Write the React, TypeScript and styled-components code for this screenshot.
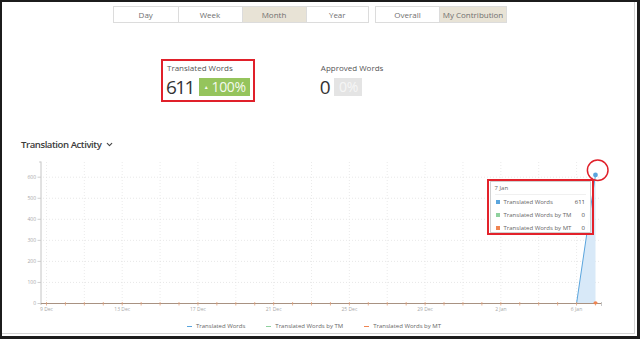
import React from "react";
import styled, { createGlobalStyle } from "styled-components";
import { ChevronDown } from "lucide-react";

const Global = createGlobalStyle`
  html, body { margin: 0; padding: 0; background: #fff; }
  body { font-family: "Open Sans", "Liberation Sans", sans-serif; }
  * { box-sizing: border-box; }
`;

const Frame = styled.div`
  width: 640px;
  height: 339px;
  border-style: solid;
  border-color: #1c1c1c;
  border-width: 2px 3px 3px 2px;
  background: #fff;
  overflow: hidden;
`;

const Page = styled.div`
  width: 633px;
  height: 332px;
  border-right: 1px solid #d4d4d4;
  border-bottom: 1px solid #d4d4d4;
  display: flex;
  flex-direction: column;
`;

const Toolbar = styled.div`
  display: flex;
  gap: 6px;
  margin-top: 4px;
  padding-left: 111px;
  height: 17px;
`;

const Group = styled.div`
  display: flex;
  border: 1px solid #dcdcdc;
  background: #fff;
`;

const TabButton = styled.div<{ $w: number; $active?: boolean }>`
  width: ${(p) => p.$w}px;
  height: 15px;
  display: flex;
  align-items: center;
  justify-content: center;
  font-size: 8px;
  color: #707070;
  background: ${(p) => (p.$active ? "#e8e3d6" : "#fff")};
  & + & { border-left: 1px solid #dcdcdc; }
`;

const StatsRow = styled.div`
  display: flex;
  gap: 60px;
  margin-top: 36px;
  padding-left: 159px;
`;

const StatBox = styled.div<{ $highlight?: boolean }>`
  border: 2px solid ${(p) => (p.$highlight ? "#e0202a" : "transparent")};
  padding: 2px 3px 2px 3px;
`;

const StatLabel = styled.div`
  font-size: 8px;
  line-height: 10px;
  color: #555;
  padding-left: 1px;
  white-space: nowrap;
`;

const StatValueRow = styled.div`
  display: flex;
  align-items: center;
  gap: 4px;
  margin-top: 3px;
  height: 22px;
`;

const StatNumber = styled.div`
  font-size: 19px;
  line-height: 22px;
  font-weight: 400;
  color: #333;
  letter-spacing: -1.6px;
  padding-right: 1px;
`;

const Badge = styled.div<{ $tone: "green" | "gray" }>`
  height: 18px;
  display: flex;
  align-items: center;
  gap: 3px;
  padding: 0 4px 0 5px;
  font-size: 14px;
  line-height: 18px;
  letter-spacing: -0.3px;
  background: ${(p) => (p.$tone === "green" ? "#95c45c" : "#e4e4e4")};
  color: ${(p) => (p.$tone === "green" ? "rgba(255,255,255,0.92)" : "#f6f6f6")};
`;

const Caret = styled.span`
  font-size: 5px;
  line-height: 5px;
`;

const TitleRow = styled.div`
  display: flex;
  align-items: center;
  gap: 4px;
  margin-top: 35px;
  padding-left: 19px;
  height: 14px;
`;

const Title = styled.div`
  font-size: 9.6px;
  font-weight: 600;
  color: #3b3b3b;
  letter-spacing: -0.45px;
`;

const ChartWrap = styled.div`
  position: relative;
  margin-top: 4px;
  height: 162px;
`;

const ChartSvg = styled.svg`
  display: block;
  width: 632px;
  height: 162px;
`;

const TooltipHighlight = styled.div`
  position: absolute;
  left: 484.5px;
  top: 24px;
  width: 107.5px;
  height: 55.5px;
  border: 2px solid #e3222b;
  padding: 0 1px;
`;

const Tooltip = styled.div`
  width: 100%;
  height: 100%;
  border: 1px solid #d0d0d0;
  background: rgba(255, 255, 255, 0.96);
  padding: 2px 4px 0 4px;
  font-size: 6px;
  color: #666;
`;

const TooltipHeader = styled.div`
  line-height: 9px;
  padding-bottom: 1px;
  border-bottom: 1px solid #f0f0f0;
  margin-bottom: 1px;
`;

const TooltipRow = styled.div`
  display: flex;
  align-items: center;
  height: 12.8px;
`;

const Swatch = styled.span<{ $c: string }>`
  width: 4px;
  height: 4px;
  background: ${(p) => p.$c};
  margin-right: 4px;
  margin-left: 1px;
`;

const RowLabel = styled.span`
  flex: 1;
  white-space: nowrap;
`;

const RowValue = styled.span`
  color: #444;
  font-weight: 400;
  padding-right: 1px;
`;

const Legend = styled.div`
  display: flex;
  align-items: center;
  gap: 21px;
  margin-top: 5px;
  padding-left: 185px;
  height: 8px;
`;

const LegendItem = styled.div`
  display: flex;
  align-items: center;
  gap: 4px;
  font-size: 6px;
  color: #666;
`;

const LegendDash = styled.span<{ $c: string }>`
  width: 5px;
  height: 1px;
  background: ${(p) => p.$c};
`;

const BLUE = "#5aa5dd";
const GREEN = "#8fd19e";
const ORANGE = "#ef8552";

const X0 = 46.5;
const DAY = 18.93;
const Y0 = 303.5;
const UNIT = 21.05 / 100;

const yTicks = [0, 100, 200, 300, 400, 500, 600];
const xLabels = ["9 Dec", "13 Dec", "17 Dec", "21 Dec", "25 Dec", "29 Dec", "2 Jan", "6 Jan"];

function Chart() {
  const dx = (d: number) => X0 + d * DAY;
  const vy = (v: number) => Y0 - v * UNIT;
  const lastX = dx(29);
  const prevX = dx(28);
  const topY = vy(611);
  return (
    <ChartSvg viewBox="2 155 632 162">
      {yTicks.slice(1).map((t) => (
        <line key={"h" + t} x1={43} x2={601} y1={vy(t)} y2={vy(t)} stroke="#dedede" strokeWidth={0.7} strokeDasharray="1 2" />
      ))}
      {Array.from({ length: 15 }).map((_, i) => (
        <line key={"v" + i} x1={dx(i * 2)} x2={dx(i * 2)} y1={162} y2={302} stroke="#e2e2e2" strokeWidth={0.7} strokeDasharray="1 2" />
      ))}
      <line x1={41} x2={41} y1={161.5} y2={305} stroke="#c4c4c4" strokeWidth={1} />
      <line x1={39} x2={41} y1={162} y2={162} stroke="#c4c4c4" strokeWidth={0.8} />
      {yTicks.map((t) => (
        <g key={"y" + t}>
          <line x1={37.5} x2={41} y1={vy(t)} y2={vy(t)} stroke="#c4c4c4" strokeWidth={0.8} />
          <text x={36} y={vy(t) + 1.7} fontSize={5} fill="#a8a8a8" textAnchor="end" fontFamily="Open Sans, sans-serif">
            {t}
          </text>
        </g>
      ))}
      <polygon points={`${prevX},${Y0} ${lastX},${topY} ${lastX},${Y0}`} fill="#d8e9f8" />
      <line x1={41} x2={prevX} y1={Y0} y2={Y0} stroke={BLUE} strokeWidth={0.8} />
      <line x1={prevX} x2={lastX} y1={Y0} y2={topY} stroke={BLUE} strokeWidth={1} />
      <line x1={41} x2={601.5} y1={Y0} y2={Y0} stroke="#a89282" strokeWidth={1} />
      {Array.from({ length: 30 }).map((_, i) => (
        <line key={"t" + i} x1={dx(i)} x2={dx(i)} y1={302} y2={305.5} stroke="#e0a07a" strokeWidth={0.8} />
      ))}
      <line x1={601.5} x2={601.5} y1={302} y2={306} stroke="#bbb" strokeWidth={0.8} />
      <ellipse cx={lastX} cy={302.8} rx={2} ry={1.6} fill={ORANGE} />
      {xLabels.map((l, i) => (
        <text key={l} x={dx(i * 4)} y={311} fontSize={5} fill="#a8a8a8" textAnchor="middle" fontFamily="Open Sans, sans-serif">
          {l}
        </text>
      ))}
      <circle cx={lastX} cy={topY} r={2.4} fill={BLUE} />
      <circle cx={597.7} cy={170.2} r={10.3} fill="none" stroke="#e0202a" strokeWidth={1.5} />
    </ChartSvg>
  );
}

export default function App() {
  return (
    <>
      <Global />
      <Frame>
        <Page>
          <Toolbar>
            <Group>
              <TabButton $w={63.5}>Day</TabButton>
              <TabButton $w={64}>Week</TabButton>
              <TabButton $w={64} $active>Month</TabButton>
              <TabButton $w={62.5}>Year</TabButton>
            </Group>
            <Group>
              <TabButton $w={63}>Overall</TabButton>
              <TabButton $w={67} $active>My Contribution</TabButton>
            </Group>
          </Toolbar>

          <StatsRow>
            <StatBox $highlight>
              <StatLabel>Translated Words</StatLabel>
              <StatValueRow>
                <StatNumber>611</StatNumber>
                <Badge $tone="green">
                  <Caret>▲</Caret>
                  <span>100%</span>
                </Badge>
              </StatValueRow>
            </StatBox>
            <StatBox>
              <StatLabel>Approved Words</StatLabel>
              <StatValueRow>
                <StatNumber>0</StatNumber>
                <Badge $tone="gray">0%</Badge>
              </StatValueRow>
            </StatBox>
          </StatsRow>

          <TitleRow>
            <Title>Translation Activity</Title>
            <ChevronDown size={9} strokeWidth={3} color="#444" />
          </TitleRow>

          <ChartWrap>
            <Chart />
            <TooltipHighlight>
              <Tooltip>
                <TooltipHeader>7 Jan</TooltipHeader>
                <TooltipRow>
                  <Swatch $c={BLUE} />
                  <RowLabel>Translated Words</RowLabel>
                  <RowValue>611</RowValue>
                </TooltipRow>
                <TooltipRow>
                  <Swatch $c={GREEN} />
                  <RowLabel>Translated Words by TM</RowLabel>
                  <RowValue>0</RowValue>
                </TooltipRow>
                <TooltipRow>
                  <Swatch $c={ORANGE} />
                  <RowLabel>Translated Words by MT</RowLabel>
                  <RowValue>0</RowValue>
                </TooltipRow>
              </Tooltip>
            </TooltipHighlight>
          </ChartWrap>

          <Legend>
            <LegendItem>
              <LegendDash $c={BLUE} />
              Translated Words
            </LegendItem>
            <LegendItem>
              <LegendDash $c={GREEN} />
              Translated Words by TM
            </LegendItem>
            <LegendItem>
              <LegendDash $c={ORANGE} />
              Translated Words by MT
            </LegendItem>
          </Legend>
        </Page>
      </Frame>
    </>
  );
}
